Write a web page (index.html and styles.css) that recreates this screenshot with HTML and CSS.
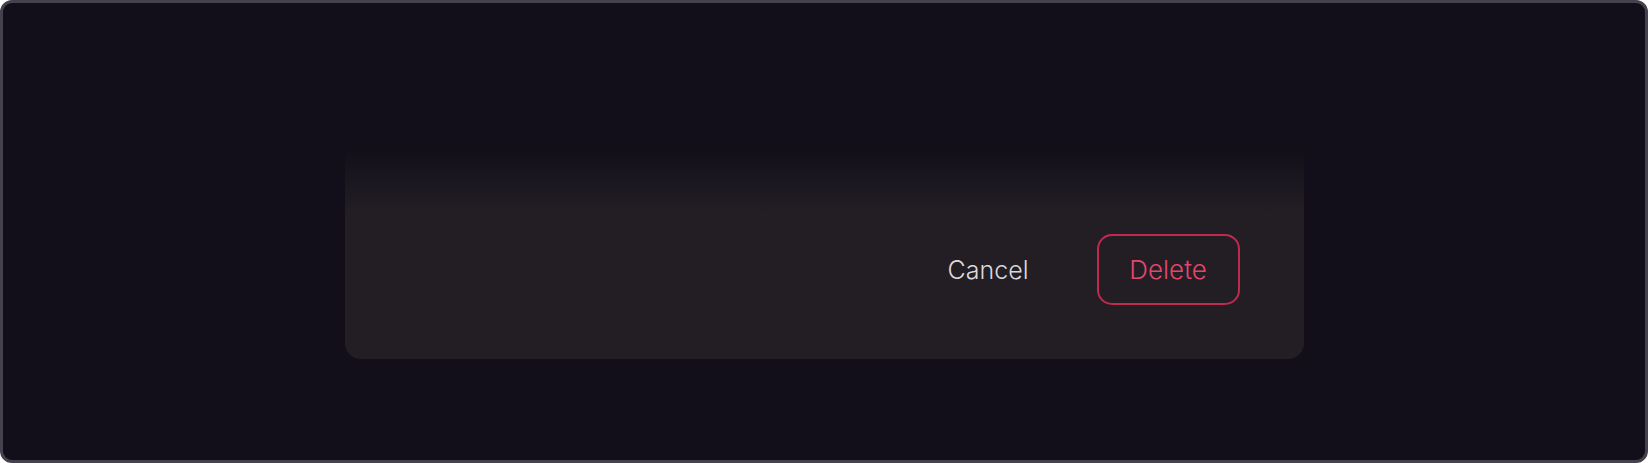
FILE: index.html
```html
<!DOCTYPE html>
<html lang="en">
<head>
    <meta charset="UTF-8">
    <meta name="viewport" content="width=device-width, initial-scale=1.0">
    <title>Delete item</title>
    <link rel="stylesheet" href="styles.css">
</head>
<body>

<div class="frame">
    <div class="dialog">
        <div class="actions">
            <button class="btn btn-cancel">Cancel</button>
            <button class="btn btn-delete">Delete</button>
        </div>
    </div>
</div>

</body>
</html>
```

FILE: styles.css
```css
* {
    box-sizing: border-box;
}
body {
    margin: 0;
    font-family: Inter, "Noto Sans", sans-serif;
    background-color: #ffffff;
}
.frame {
    height: 463px;
    padding-top: 137px;
    border: 3px solid #46414c;
    border-radius: 12px;
    background-color: #130f1a;
}
.dialog {
    width: 959px;
    height: 219px;
    margin: 0 auto;
    display: flex;
    align-items: flex-end;
    justify-content: flex-end;
    padding: 0 64px 54px;
    border-radius: 0 0 16px 16px;
    background: linear-gradient(to bottom, rgba(34, 30, 35, 0) 8px, rgba(34, 30, 35, 1) 72px);
}
.actions {
    display: flex;
    gap: 32px;
}
.btn {
    height: 71px;
    padding: 0 34px;
    font-family: inherit;
    font-size: 25px;
    font-weight: 300;
    background: none;
    border: 2px solid transparent;
    border-radius: 15px;
    cursor: pointer;
}
.btn-cancel {
    color: #dcd8de;
}
.btn-delete {
    width: 143px;
    padding: 0;
    font-size: 26px;
    color: #e2466e;
    border-color: #c2294f;
}
```
